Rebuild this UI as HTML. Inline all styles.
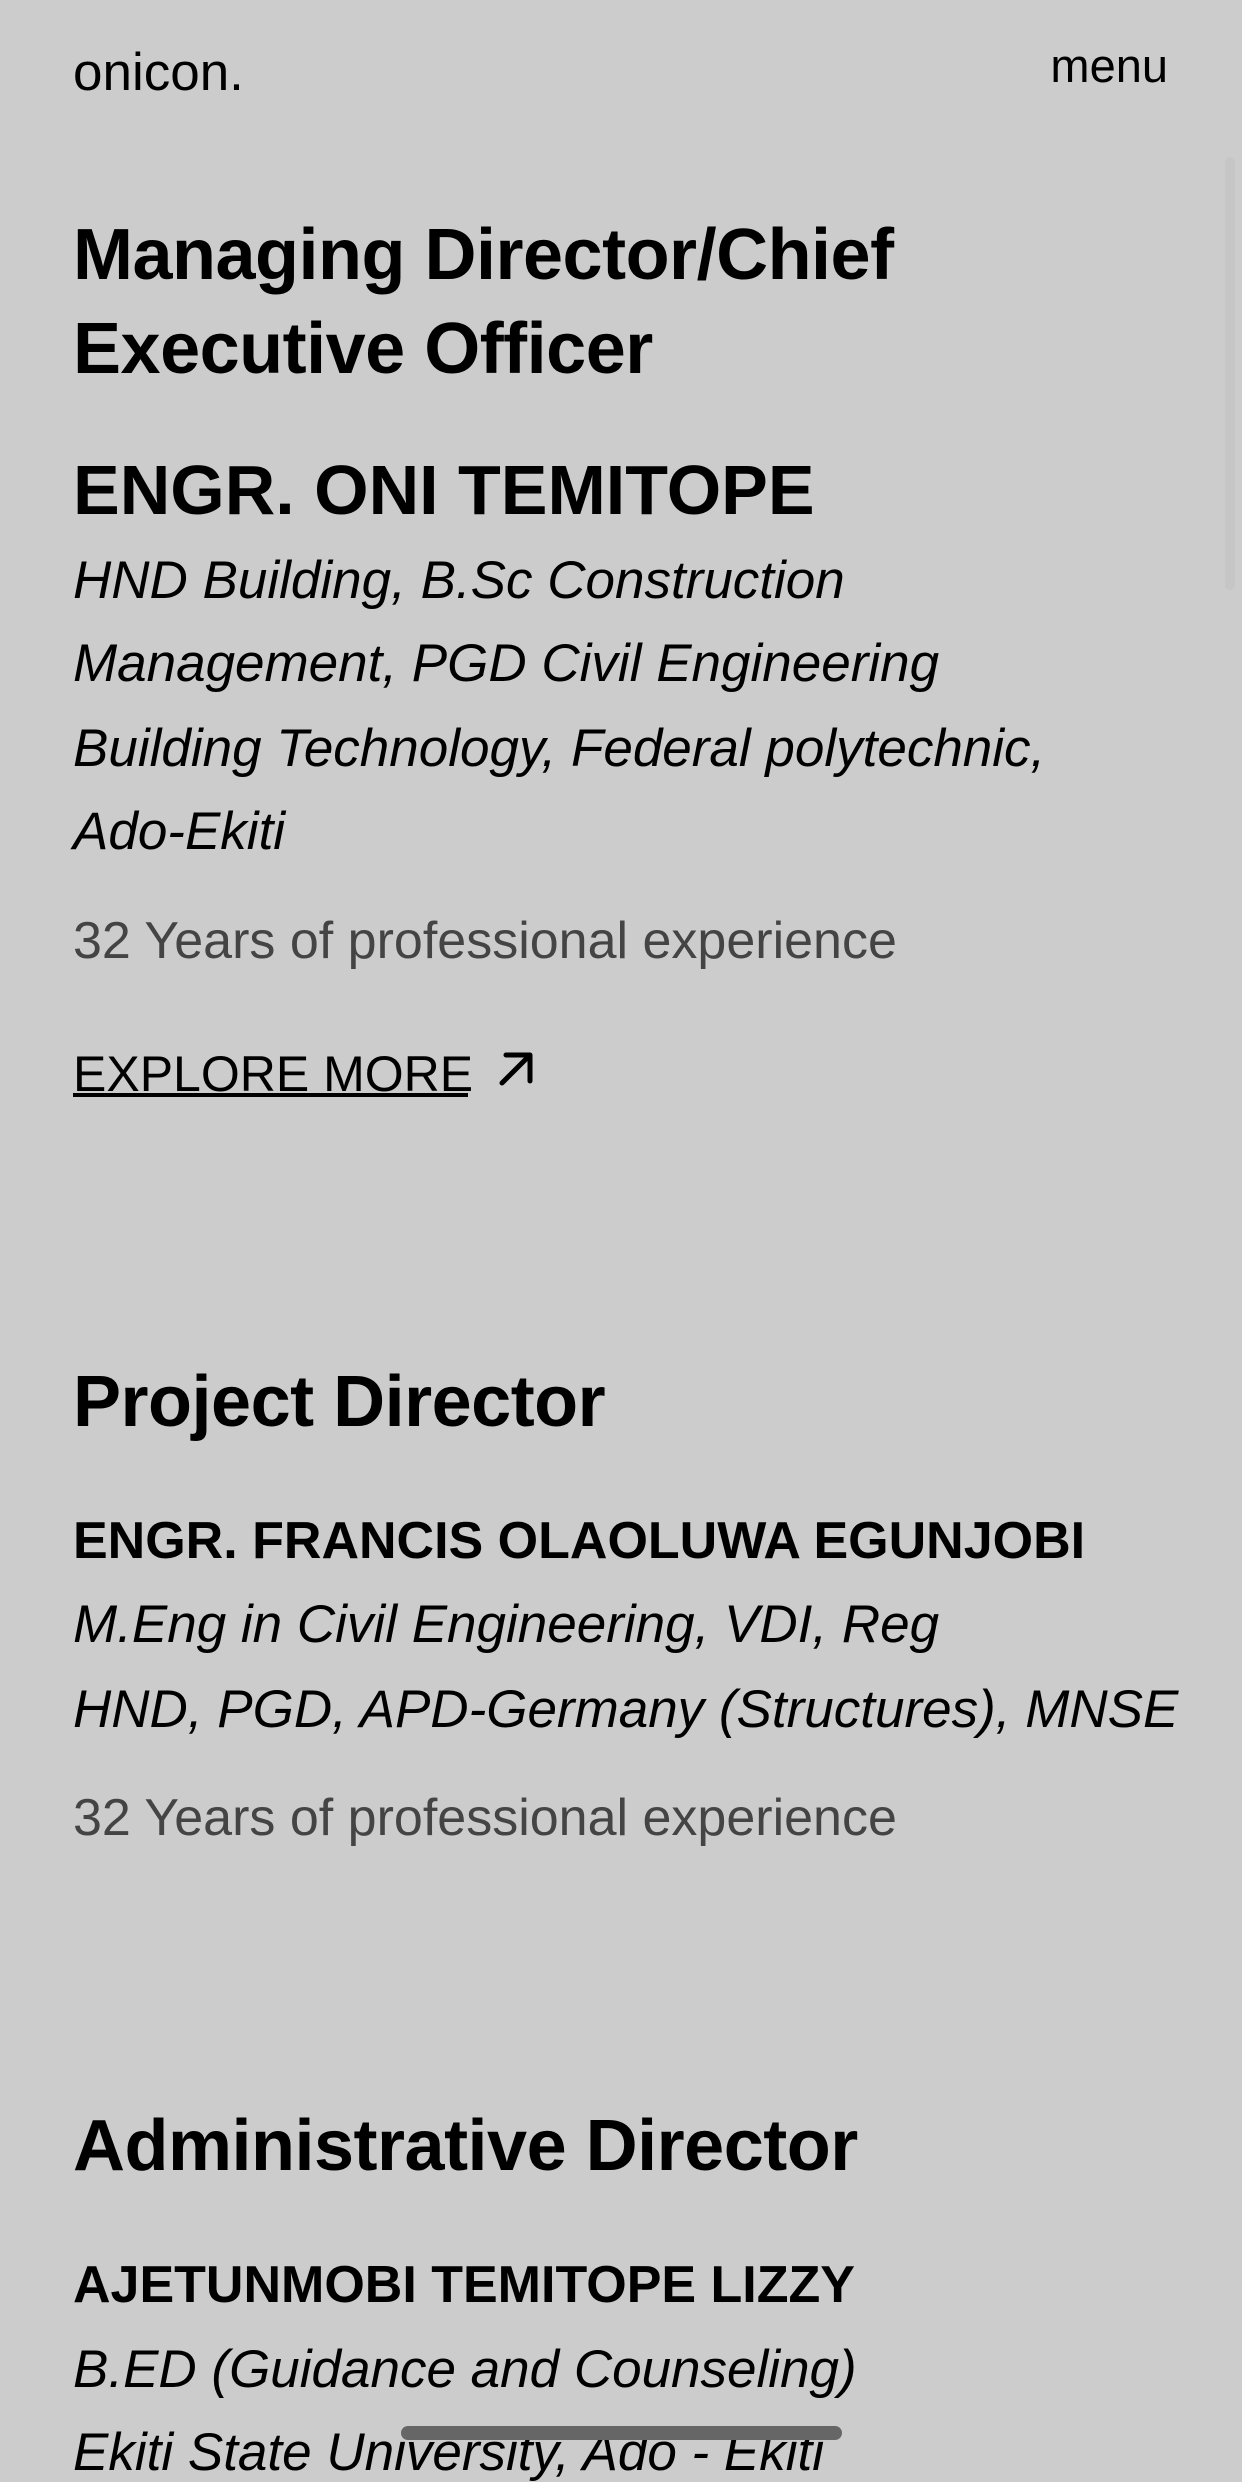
<!DOCTYPE html>
<html><head><meta charset="utf-8"><style>
html,body{margin:0;padding:0}
body{width:1242px;height:2464px;background:#cccccc;position:relative;overflow:hidden;font-family:"Liberation Sans",sans-serif;color:#000}
.t{position:absolute;left:73px;white-space:nowrap;line-height:1}
.h{font-size:72px;font-weight:bold;letter-spacing:-0.5px}
.n{font-weight:bold}
.i{font-style:italic;font-size:53px}
.g{font-size:52px;color:#444}
</style></head><body>
<div class="t" style="top:46px;font-size:53px">onicon.</div>
<div class="t" style="top:42px;left:auto;right:74px;font-size:47px">menu</div>
<div style="position:absolute;left:1225px;top:157px;width:10px;height:433px;background:#c6c6c6;border-radius:5px"></div>

<div class="t h" style="top:219px">Managing Director/Chief</div>
<div class="t h" style="top:313px">Executive Officer</div>
<div class="t n" style="top:455px;font-size:70px">ENGR. ONI TEMITOPE</div>
<div class="t i" style="top:554px">HND Building, B.Sc Construction</div>
<div class="t i" style="top:637px">Management, PGD Civil Engineering</div>
<div class="t i" style="top:722px">Building Technology, Federal polytechnic,</div>
<div class="t i" style="top:805px">Ado-Ekiti</div>
<div class="t g" style="top:915px">32 Years of professional experience</div>
<div class="t" style="top:1049px;font-size:50px">EXPLORE MORE</div>
<div style="position:absolute;left:73px;top:1093px;width:395px;height:4px;background:#000"></div>
<svg style="position:absolute;left:494px;top:1047px" width="44" height="44" viewBox="0 0 44 44"><path d="M8 36 L36 8 M12 8 H36 V34" fill="none" stroke="#000" stroke-width="5" stroke-linecap="round" stroke-linejoin="round"/></svg>

<div class="t h" style="top:1366px">Project Director</div>
<div class="t n" style="top:1515px;font-size:52px">ENGR. FRANCIS OLAOLUWA EGUNJOBI</div>
<div class="t i" style="top:1598px">M.Eng in Civil Engineering, VDI, Reg</div>
<div class="t i" style="top:1683px">HND, PGD, APD-Germany (Structures), MNSE</div>
<div class="t g" style="top:1792px">32 Years of professional experience</div>

<div class="t h" style="top:2110px">Administrative Director</div>
<div class="t n" style="top:2259px;font-size:52px">AJETUNMOBI TEMITOPE LIZZY</div>
<div class="t i" style="top:2343px">B.ED (Guidance and Counseling)</div>
<div class="t i" style="top:2426px">Ekiti State University, Ado - Ekiti</div>
<div style="position:absolute;left:401px;top:2426px;width:441px;height:14px;background:#666;border-radius:7px"></div>
</body></html>
